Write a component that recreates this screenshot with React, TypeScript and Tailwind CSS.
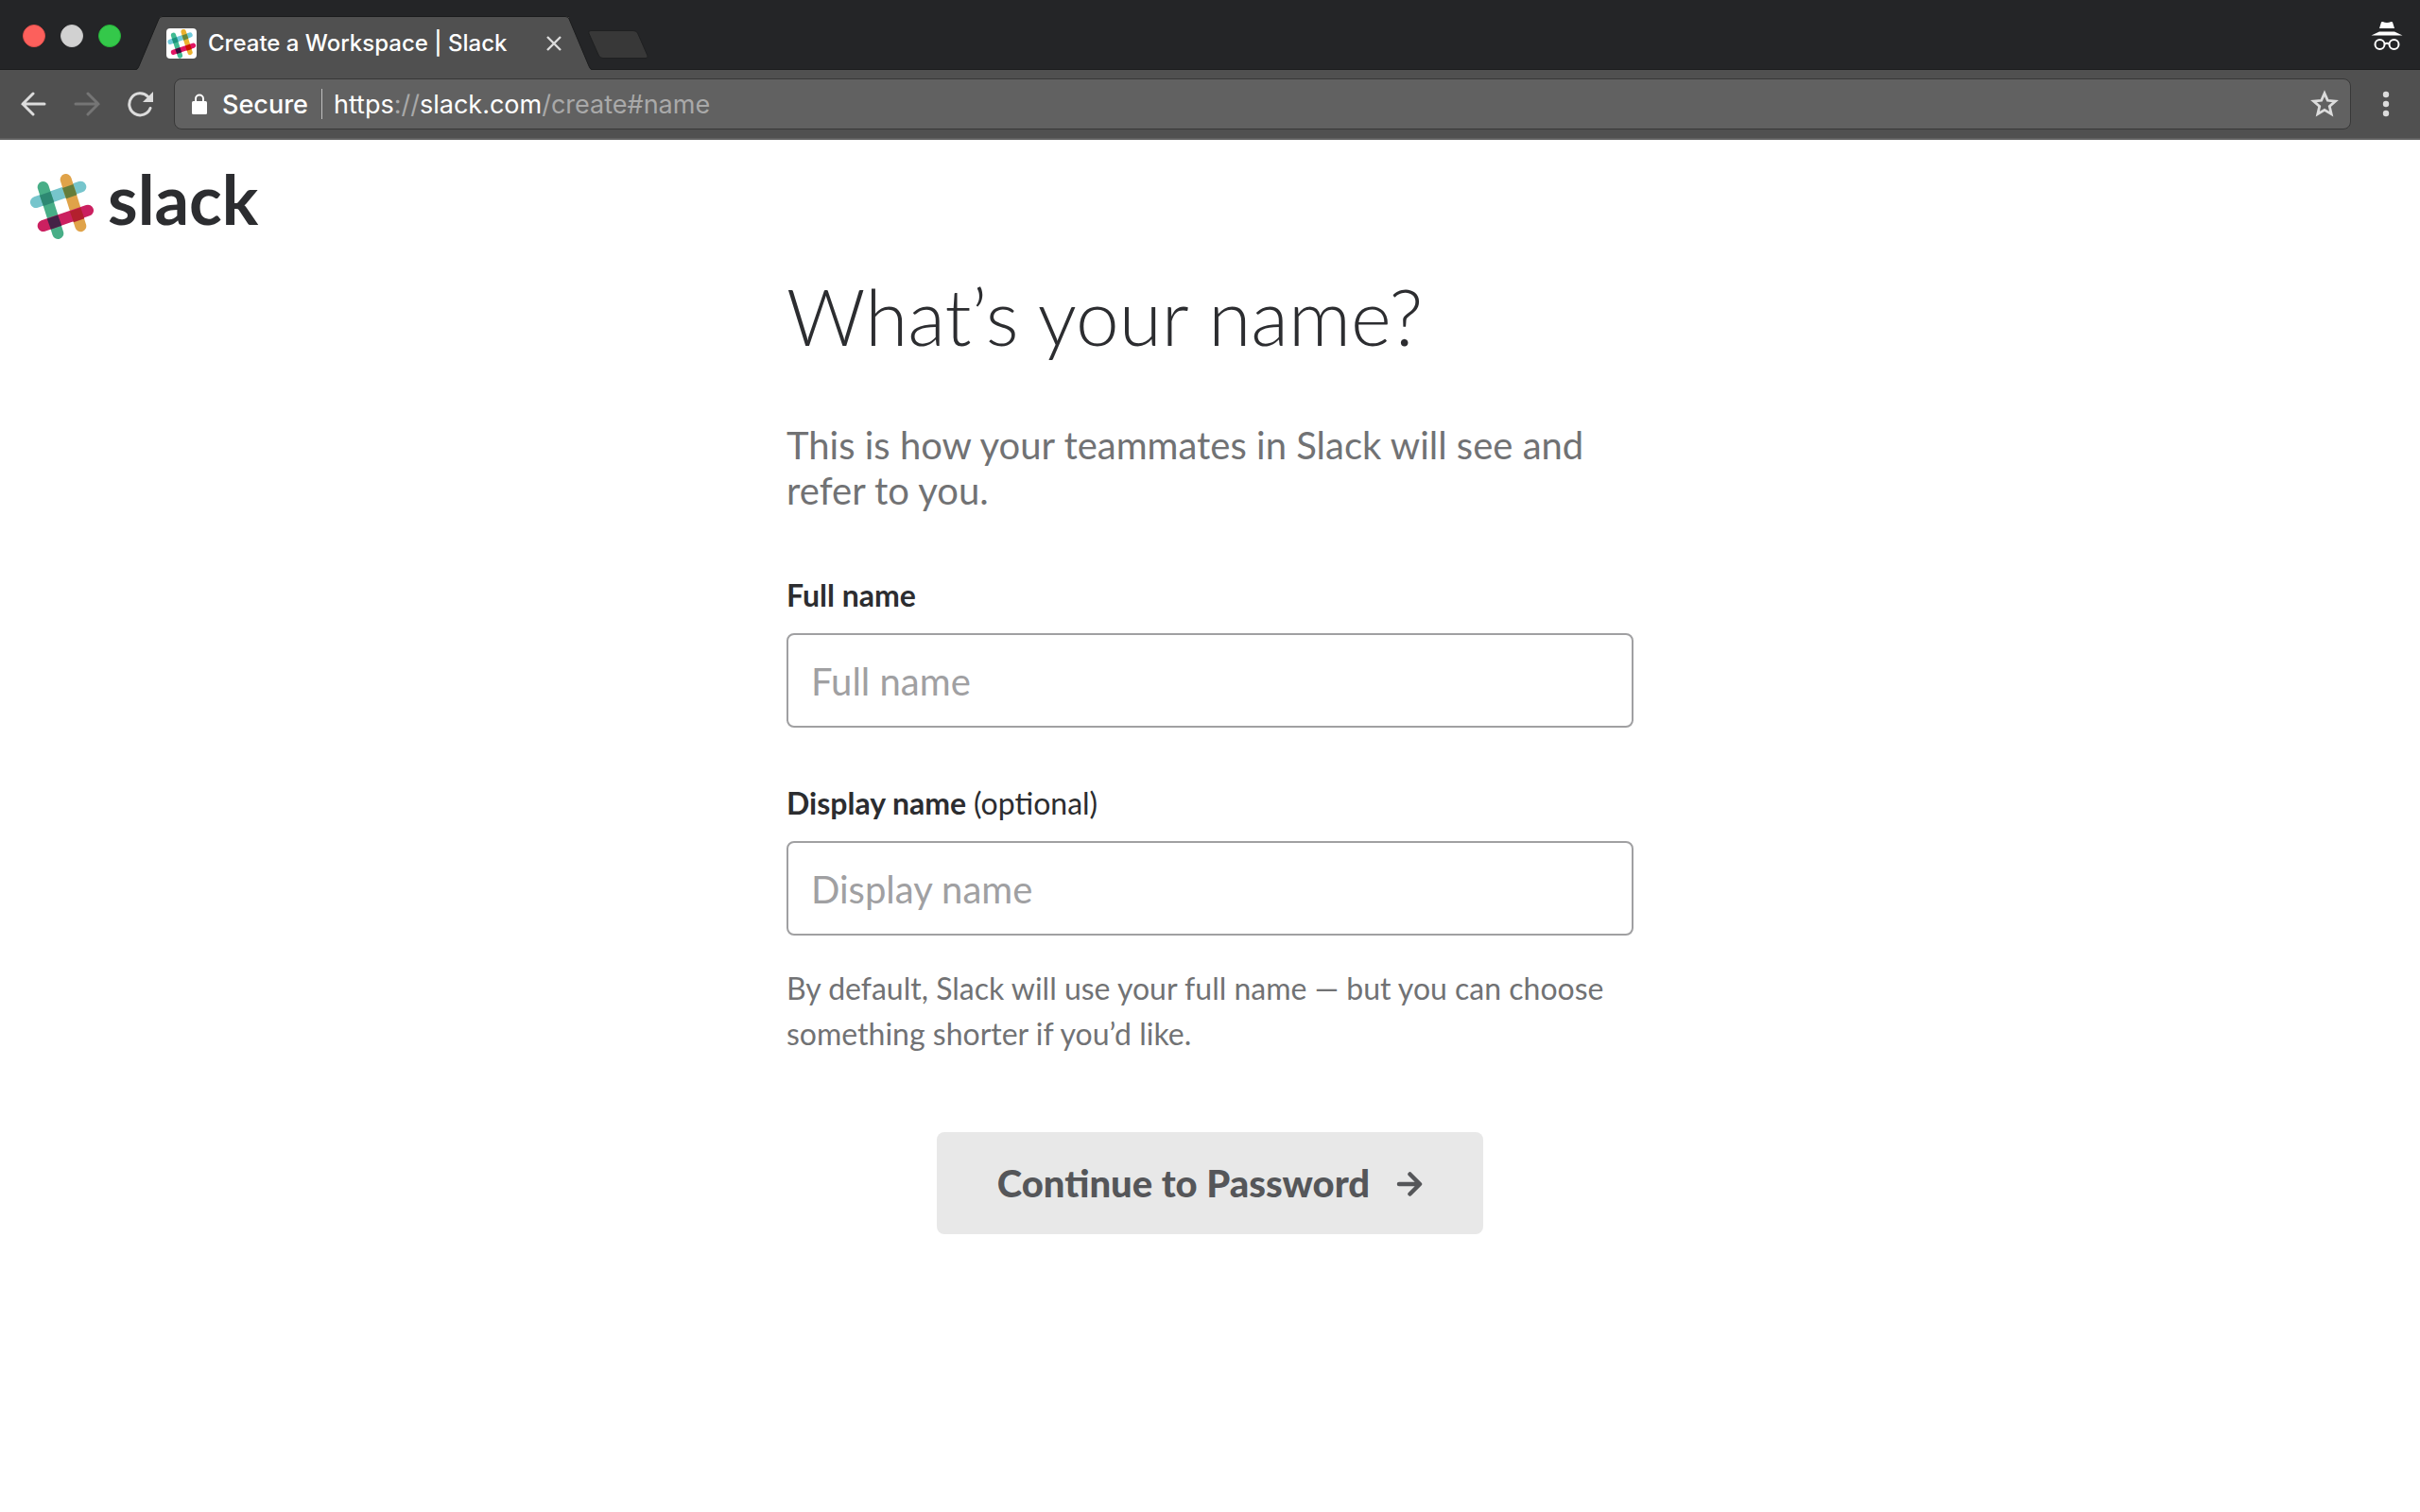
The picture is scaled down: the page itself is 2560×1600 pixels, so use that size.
import React from "react";

type HashColors = {
  blue: string;
  green: string;
  pink: string;
  orange: string;
  greenBlue: string;
  orangeBlue: string;
  greenPink: string;
  orangePink: string;
};

const logoColors: HashColors = {
  blue: "#76c5cc",
  green: "#48ae87",
  pink: "#cb2060",
  orange: "#e0a349",
  greenBlue: "#2d8872",
  orangeBlue: "#647d3b",
  greenPink: "#452146",
  orangePink: "#b3202e",
};

const faviconColors: HashColors = {
  blue: "#70cadb",
  green: "#40bb93",
  pink: "#e01563",
  orange: "#ecb22e",
  greenBlue: "#1a937d",
  orangeBlue: "#65863a",
  greenPink: "#3a0c3b",
  orangePink: "#cc1300",
};

function SlackHash({ colors, className }: { colors: HashColors; className: string }) {
  return (
    <svg viewBox="0 0 68 70" className={className} aria-hidden="true">
      <g strokeWidth="12" strokeLinecap="round" fill="none">
        <path d="M6 30L53.3 13.7" stroke={colors.blue} />
        <path d="M37.7 6L53.3 55.3" stroke={colors.orange} />
        <path d="M13.7 14L29.3 63" stroke={colors.green} />
        <path d="M13.7 55L61 38.7" stroke={colors.pink} />
      </g>
      <g strokeWidth="12" fill="none">
        <path d="M11.9 28.3L23.3 24.3" stroke={colors.greenBlue} />
        <path d="M36 20.6L47.4 16.6" stroke={colors.orangeBlue} />
        <path d="M19.8 53.2L31.2 49.2" stroke={colors.greenPink} />
        <path d="M43.9 45.5L55.3 41.5" stroke={colors.orangePink} />
      </g>
    </svg>
  );
}

function TabStrip() {
  return (
    <div className="flex h-[74px] items-end justify-between border-b border-[#1b1c1d] bg-[#242527]">
      <div className="flex h-full items-end">
        <div className="flex h-full items-center gap-4 pl-6 pr-4 pt-0.5">
          <button aria-label="Close window" className="size-6 rounded-full border border-[#e2504c] bg-[#fc605c]" />
          <button aria-label="Minimize window" className="size-6 rounded-full border border-[#c6c6c6] bg-[#d1d1d1]" />
          <button aria-label="Zoom window" className="size-6 rounded-full border border-[#27b43a] bg-[#34c84a]" />
        </div>
        <div className="-mb-px flex h-[57px]">
          <svg viewBox="0 0 28 57" className="h-full w-7" aria-hidden="true">
            <path d="M0 57Q2 56 3 53L24 3Q25 0 28 0V57Z" fill="#505050" />
            <path d="M0 56.5Q2 56 3 53L24 3Q25 .5 28 .5" fill="none" stroke="#1b1c1d" />
          </svg>
          <div className="flex items-center gap-3 border-t border-[#1b1c1d] bg-[#505050] pl-1 pr-2">
            <span className="flex size-8 items-center justify-center rounded bg-white">
              <SlackHash colors={faviconColors} className="size-[31px]" />
            </span>
            <span className="w-[346px] font-['Inter',sans-serif] text-2xl font-medium text-white">
              Create a Workspace | Slack
            </span>
            <button aria-label="Close tab">
              <svg viewBox="0 0 16 16" className="size-4" stroke="#dcdcdc" strokeWidth="2.4" aria-hidden="true">
                <path d="M1 1L15 15M15 1L1 15" />
              </svg>
            </button>
          </div>
          <svg viewBox="0 0 28 57" className="-ml-1 h-full w-7" aria-hidden="true">
            <path d="M28 57Q26 56 25 53L4 3Q3 0 0 0V57Z" fill="#505050" />
            <path d="M28 56.5Q26 56 25 53L4 3Q3 .5 0 .5" fill="none" stroke="#1b1c1d" />
          </svg>
        </div>
        <button aria-label="New tab" className="-ml-1 mb-2.5">
          <svg viewBox="0 0 64 31" className="h-[31px] w-16" aria-hidden="true">
            <path
              d="M3 .5H48Q51 .5 52.500 3L63 27Q64 29.500 61 29.500H16Q13 29.500 11.500 27L.8 3Q0 .5 3 .5Z"
              fill="#383838"
              stroke="#1f2021"
            />
          </svg>
        </button>
      </div>
      <svg viewBox="0 0 34 32" className="mb-[19px] mr-[18px] h-8 w-[34px]" aria-hidden="true">
        <path
          d="M11 1.500Q11.500 .6 12.600 1Q17 3 21.400 1Q22.500 .6 23 1.500L25 8H9Z"
          fill="#fff"
        />
        <path d="M.5 15.500L9 11.500H25L33.500 15.500Z" fill="#fff" />
        <g fill="none" stroke="#fff" strokeWidth="2">
          <circle cx="9.500" cy="25" r="5" />
          <circle cx="24.500" cy="25" r="5" />
          <path d="M14.500 24.500Q17 23 19.500 24.500" />
        </g>
      </svg>
    </div>
  );
}

function Toolbar() {
  return (
    <div className="flex h-[74px] items-center border-b-2 border-[#616161] bg-[#505050] pl-[22px] pr-8">
      <div className="flex items-center gap-7 pr-[22px]">
        <button aria-label="Back">
          <svg viewBox="0 0 28 28" className="size-7" fill="none" stroke="#dcdcdc" strokeWidth="3" strokeLinecap="round" aria-hidden="true">
            <path d="M25 14H2M13 3L2 14L13 25" />
          </svg>
        </button>
        <button aria-label="Forward">
          <svg viewBox="0 0 28 28" className="size-7" fill="none" stroke="#757575" strokeWidth="3" strokeLinecap="round" aria-hidden="true">
            <path d="M2 14H26M15 3L26 14L15 25" />
          </svg>
        </button>
        <button aria-label="Reload">
          <svg viewBox="0 0 28 28" className="size-7" fill="none" aria-hidden="true">
            <path d="M25 18.500A11.500 11.500 0 1 1 22.500 6.300" stroke="#dcdcdc" strokeWidth="3" strokeLinecap="round" />
            <path d="M28 1V12H17Z" fill="#dcdcdc" />
          </svg>
        </button>
      </div>
      <div className="flex h-[54px] grow items-center rounded-lg border border-[#383838] bg-[#616161] pl-[18px] pr-3 font-['Inter',sans-serif] text-[27px]">
        <svg viewBox="0 0 16 22" className="h-[22px] w-4" aria-hidden="true">
          <rect x="0" y="8" width="16" height="14" rx="1.500" fill="#fff" />
          <path d="M4 9V5.500a4 4 0 0 1 8 0V9" fill="none" stroke="#fff" strokeWidth="2" />
        </svg>
        <span className="ml-4 pt-0.5 font-medium text-white">Secure</span>
        <span className="ml-3.5 h-8 w-px bg-[#c0c0c0]" />
        <span className="ml-3 pt-0.5 text-[#a9a9a9]">
          <span className="text-white">https</span>://<span className="text-white">slack.com</span>/create#name
        </span>
        <button aria-label="Bookmark this page" className="ml-auto">
          <svg viewBox="0 0 30 30" className="size-[30px]" fill="none" stroke="#dcdcdc" strokeWidth="2.800" aria-hidden="true">
            <path d="M15 3.800L18.300 11.300L26.500 12L20.300 17.500L22.200 25.600L15 21.300L7.800 25.600L9.700 17.500L3.500 12L11.700 11.300Z" />
          </svg>
        </button>
      </div>
      <button aria-label="Menu" className="ml-[33px]">
        <svg viewBox="0 0 8 28" className="h-7 w-2" fill="#dcdcdc" aria-hidden="true">
          <circle cx="4" cy="4" r="3.200" />
          <circle cx="4" cy="14" r="3.200" />
          <circle cx="4" cy="24" r="3.200" />
        </svg>
      </button>
    </div>
  );
}

const inputClass =
  "mt-4 block h-[100px] w-full rounded-lg border-2 border-[#a0a0a2] bg-white px-6 pt-0.5 text-[40px] text-[#2c2d30] placeholder:text-[#a0a0a2]";

export default function App() {
  return (
    <div className="flex min-h-screen flex-col bg-white font-['Lato',sans-serif] text-[#2c2d30]">
      <TabStrip />
      <Toolbar />
      <header className="flex h-[136px] items-start px-8 pt-5">
        <a href="#home" className="flex items-start gap-3.5">
          <SlackHash colors={logoColors} className="mt-4 h-[70px] w-[68px]" />
          <span className="pt-0.5 text-[72px] leading-[80px] font-bold">slack</span>
        </a>
      </header>
      <main className="mx-auto w-full max-w-[896px]">
        <h1 className="text-[82px] leading-[100px] font-light">What’s your name?</h1>
        <p className="mt-[63px] text-[40px] leading-[48px] text-[#717274]">
          This is how your teammates in Slack will see and refer to you.
        </p>
        <form className="mt-[63px]" onSubmit={(e) => e.preventDefault()}>
          <label htmlFor="full-name" className="block text-[32px] leading-[48px] font-bold">
            Full name
          </label>
          <input id="full-name" type="text" placeholder="Full name" className={inputClass} />
          <label htmlFor="display-name" className="mt-14 block text-[32px] leading-[48px] font-bold">
            Display name <span className="font-normal">(optional)</span>
          </label>
          <input id="display-name" type="text" placeholder="Display name" className={inputClass} />
          <p className="mt-8 text-[32px] leading-[48px] text-[#717274]">
            By default, Slack will use your full name — but you can choose something shorter if you’d like.
          </p>
          <button
            type="submit"
            className="mx-auto mt-20 flex h-[108px] items-center gap-7 rounded-lg bg-[#e8e8e8] px-16 font-['Lato_Black','Lato',sans-serif] text-[40px] font-black text-[#555659]"
          >
            Continue to Password
            <svg viewBox="0 0 28 28" className="size-7" fill="none" stroke="#555659" strokeWidth="4.500" strokeLinecap="round" strokeLinejoin="round" aria-hidden="true">
              <path d="M3 15H24M14.500 4.500L25 15L14.500 25.500" />
            </svg>
          </button>
        </form>
      </main>
    </div>
  );
}
